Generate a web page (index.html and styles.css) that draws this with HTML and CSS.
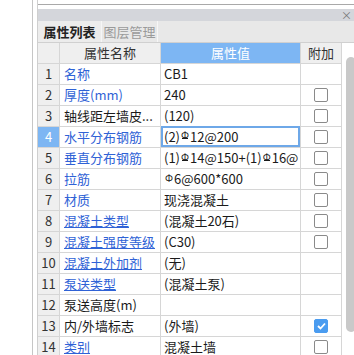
FILE: index.html
```html
<!DOCTYPE html>
<html lang="zh-CN">
<head>
  <meta charset="UTF-8">
  <title>属性列表</title>
  <link rel="stylesheet" href="styles.css">
</head>
<body>
  <div class="page">
    <div class="side"></div>
    <div class="panel">
      <div class="prev-box"></div>
      <div class="titlebar"><span class="close">×</span></div>
      <div class="tabs">
        <div class="tab active">属性列表</div>
        <div class="tab">图层管理</div>
      </div>
      <div class="grid-wrap">
        <div class="grid">
          <div class="row head">
            <div class="c num"></div>
            <div class="c name">属性名称</div>
            <div class="c val sel">属性值</div>
            <div class="c add">附加</div>
          </div>
          <div class="row"><div class="c num">1</div><div class="c name link">名称</div><div class="c val">CB1</div><div class="c add"></div></div>
          <div class="row"><div class="c num">2</div><div class="c name link">厚度(mm)</div><div class="c val">240</div><div class="c add"><span class="cb"></span></div></div>
          <div class="row"><div class="c num">3</div><div class="c name">轴线距左墙皮...</div><div class="c val">(120)</div><div class="c add"><span class="cb"></span></div></div>
          <div class="row"><div class="c num cur">4</div><div class="c name link">水平分布钢筋</div><div class="c val focus">(2)<span class="rb three">Φ</span>12@200</div><div class="c add"><span class="cb"></span></div></div>
          <div class="row"><div class="c num">5</div><div class="c name link">垂直分布钢筋</div><div class="c val">(1)<span class="rb three">Φ</span>14@150+(1)<span class="rb three">Φ</span>16@</div><div class="c add"><span class="cb"></span></div></div>
          <div class="row"><div class="c num">6</div><div class="c name link">拉筋</div><div class="c val"><span class="rb">Φ</span>6@600*600</div><div class="c add"><span class="cb"></span></div></div>
          <div class="row"><div class="c num">7</div><div class="c name link">材质</div><div class="c val">现浇混凝土</div><div class="c add"><span class="cb"></span></div></div>
          <div class="row"><div class="c num">8</div><div class="c name link u">混凝土类型</div><div class="c val">(混凝土20石)</div><div class="c add"><span class="cb"></span></div></div>
          <div class="row"><div class="c num">9</div><div class="c name link u">混凝土强度等级</div><div class="c val">(C30)</div><div class="c add"><span class="cb"></span></div></div>
          <div class="row"><div class="c num">10</div><div class="c name link u">混凝土外加剂</div><div class="c val">(无)</div><div class="c add"></div></div>
          <div class="row"><div class="c num">11</div><div class="c name link u">泵送类型</div><div class="c val">(混凝土泵)</div><div class="c add"></div></div>
          <div class="row"><div class="c num">12</div><div class="c name">泵送高度(m)</div><div class="c val"></div><div class="c add"></div></div>
          <div class="row"><div class="c num">13</div><div class="c name">内/外墙标志</div><div class="c val">(外墙)</div><div class="c add"><span class="cb on"><svg width="9" height="8" viewBox="0 0 9 8"><polyline points="1,4 3.5,6.5 8,1.5" fill="none" stroke="#fff" stroke-width="1.8"/></svg></span></div></div>
          <div class="row"><div class="c num">14</div><div class="c name link u">类别</div><div class="c val">混凝土墙</div><div class="c add"><span class="cb"></span></div></div>
        </div>
        <div class="scroll"><div class="thumb"></div></div>
      </div>
    </div>
  </div>
</body>
</html>
```

FILE: styles.css
```css
/* 属性面板，字体接近 YaHei */
body {
  margin: 0;
  background: #fff;
  font-family: "Noto Sans CJK SC", "Noto Sans", sans-serif;
  font-size: 13px;
  color: #1a1a1a;
  overflow: hidden;
}
.page {
  display: flex;
  height: 355px;
}
.side {
  width: 32px;
  border-right: 1px solid #c6c6c6;
  flex: none;
}
.panel {
  margin-left: 4px;
  flex: 1;
  min-width: 0;
  display: flex;
  flex-direction: column;
  border-left: 1px solid #cfcfcf;
}
.prev-box {
  height: 4px;
  border-bottom: 1px solid #a9a9a9;
  margin-bottom: 4px;
}
.titlebar {
  height: 12px;
  background: #d4d6db;
  display: flex;
  justify-content: flex-end;
  align-items: center;
}
.close {
  font-size: 11px;
  line-height: 12px;
  color: #777;
  padding-right: 2px;
}
.tabs {
  height: 21px;
  background: #e8e8e8;
  border-bottom: 1px solid #d0d0d0;
  display: flex;
}
.tab {
  flex: none;
  box-sizing: border-box;
  width: 56px;
  line-height: 21px;
  color: #9a9a9a;
  border-right: 1px solid #f6f6f6;
  text-align: center;
  white-space: nowrap;
}
.tab.active {
  width: 64px;
  color: #222;
  font-weight: bold;
  background: #ececec;
}
.grid-wrap {
  display: flex;
  flex: 1;
  overflow: hidden;
}
.grid {
  width: 304px;
  flex: none;
}
.row {
  display: flex;
  height: 20px;
  border-bottom: 1px solid #d6d6d6;
}
.c {
  height: 20px;
  line-height: 20px;
  border-right: 1px solid #d6d6d6;
  white-space: nowrap;
  overflow: hidden;
  position: relative;
}
.num {
  width: 21px;
  background: #efefef;
  text-align: center;
  color: #333;
}
.num.cur {
  background: #7db6f3;
  color: #fff;
}
.name {
  width: 96px;
  padding-left: 4px;
}
.val {
  width: 136px;
  padding-left: 3px;
}
.add {
  width: 40px;
  display: flex;
  align-items: center;
  justify-content: center;
}
.head .c {
  background: #efefef;
  text-align: center;
  color: #333;
  padding: 0;
}
.head .name { width: 100px; }
.head .val { width: 139px; }
.head .val.sel {
  background: #7db6f3;
  color: #fff;
}
.link {
  color: #2f62d6;
}
.link.u {
  text-decoration: underline;
  text-underline-offset: 1px;
}
.focus {
  box-shadow: inset 0 0 0 2px #6ea8e8;
  margin-top: -1px;
  height: 21px;
  line-height: 22px;
}
.rb {
  font-size: 10px;
  display: inline-block;
  position: relative;
  vertical-align: top;
  line-height: 17px;
  padding: 0 1px;
}
.rb.three::after {
  content: "";
  position: absolute;
  left: 2px;
  right: 2px;
  top: 12px;
  height: 1px;
  background: #1a1a1a;
}
.cb {
  width: 12px;
  height: 12px;
  border: 1px solid #8a8a8a;
  border-radius: 2px;
  background: #fff;
  display: flex;
  align-items: center;
  justify-content: center;
}
.cb.on {
  background: #4a9cf0;
  border-color: #4a9cf0;
}
.scroll {
  flex: 1;
  padding: 14px 0 0 4px;
}
.thumb {
  width: 10px;
  height: 275px;
  background: #c9c9c9;
  border-radius: 5px;
}
```
